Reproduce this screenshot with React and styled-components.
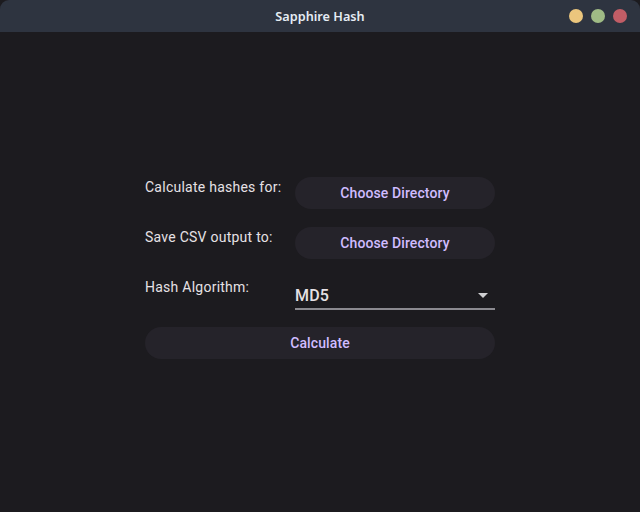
import React from "react";
import styled, { createGlobalStyle } from "styled-components";

const Global = createGlobalStyle`
  html, body { margin: 0; padding: 0; background: #1c1b1f; }
  body { font-family: Roboto, "Liberation Sans", sans-serif; }
  #root { height: 512px; }
`;

const Window = styled.div`
  width: 640px;
  height: 512px;
  display: flex;
  flex-direction: column;
  background: #1c1b1f;
  overflow: hidden;
`;

const TitleBar = styled.div`
  height: 32px;
  flex: 0 0 32px;
  background: #2e3440;
  border-radius: 9px 9px 0 0;
  display: flex;
  align-items: center;
  justify-content: center;
  position: relative;
`;

const Title = styled.span`
  font-family: "Noto Sans", "DejaVu Sans", sans-serif;
  font-size: 12.7px;
  font-weight: 600;
  color: #e5ecf4;
`;

const Lights = styled.div`
  position: absolute;
  right: 13px;
  top: 9px;
  display: flex;
  gap: 8px;
`;

const Light = styled.span`
  width: 14px;
  height: 14px;
  border-radius: 50%;
  background: ${(p) => p.$color};
`;

const Body = styled.div`
  flex: 1;
  display: flex;
  justify-content: center;
  padding-top: 145px;
`;

const Form = styled.div`
  width: 350px;
  display: grid;
  grid-template-columns: 150px 200px;
  grid-auto-rows: 32px;
  row-gap: 18px;
  align-content: start;
`;

const Label = styled.div`
  font-size: 14px;
  line-height: 20px;
  letter-spacing: 0.25px;
  color: #e6e1e5;
`;

const PillButton = styled.button`
  border: none;
  height: 32px;
  border-radius: 16px;
  background: #25232a;
  color: #d0bcff;
  font-family: Roboto, "Liberation Sans", sans-serif;
  font-size: 14px;
  font-weight: 500;
  letter-spacing: 0.1px;
  padding: 0;
  cursor: pointer;
  grid-column: ${(p) => (p.$wide ? "1 / span 2" : "auto")};
`;

const Select = styled.div`
  height: 33px;
  box-sizing: border-box;
  border-bottom: 2px solid #8b8a90;
  display: flex;
  align-items: flex-end;
  justify-content: space-between;
  padding-bottom: 4px;
`;

const SelectValue = styled.span`
  font-size: 16px;
  font-weight: 500;
  letter-spacing: 0.15px;
  color: #e6e1e5;
  line-height: 16px;
`;

const Caret = styled.svg`
  width: 10px;
  height: 5px;
  margin-right: 7px;
  margin-bottom: 6px;
`;

export default function App() {
  return (
    <>
      <Global />
      <Window>
        <TitleBar>
          <Title>Sapphire Hash</Title>
          <Lights>
            <Light $color="#ebc67d" />
            <Light $color="#9fbb85" />
            <Light $color="#c25d66" />
          </Lights>
        </TitleBar>
        <Body>
          <Form>
            <Label>Calculate hashes for:</Label>
            <PillButton>Choose Directory</PillButton>
            <Label>Save CSV output to:</Label>
            <PillButton>Choose Directory</PillButton>
            <Label>Hash Algorithm:</Label>
            <Select>
              <SelectValue>MD5</SelectValue>
              <Caret viewBox="0 0 10 5">
                <path d="M0 0 L10 0 L5 5 Z" fill="#cfcfd2" />
              </Caret>
            </Select>
            <PillButton $wide>Calculate</PillButton>
          </Form>
        </Body>
      </Window>
    </>
  );
}
